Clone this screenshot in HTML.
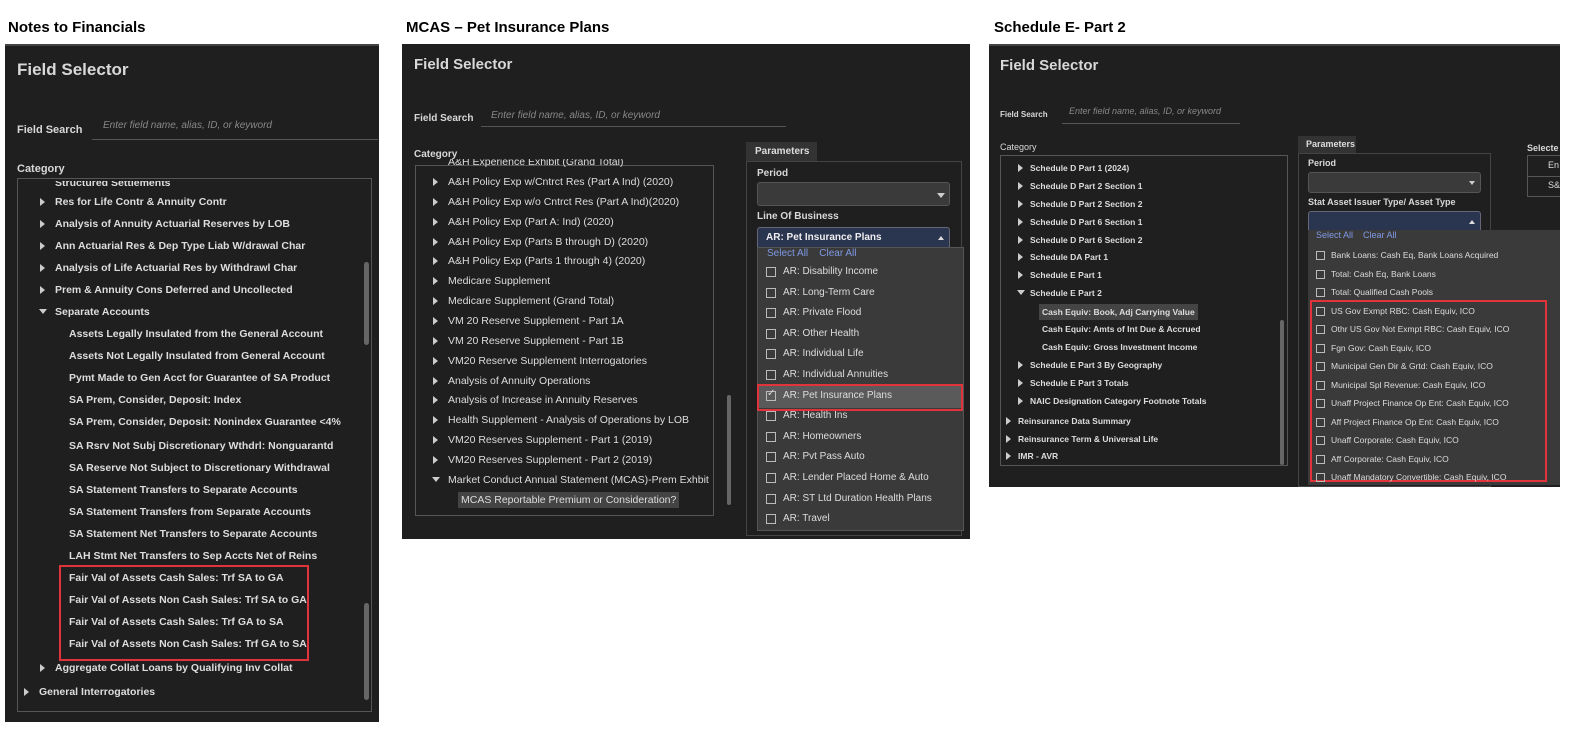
<!DOCTYPE html>
<html><head><meta charset="utf-8"><style>
*{margin:0;padding:0;box-sizing:border-box}
body{width:1588px;height:749px;background:#fff;position:relative;overflow:hidden;font-family:"Liberation Sans",sans-serif}
.a{position:absolute;white-space:nowrap}
.h{font-size:15px;font-weight:bold;color:#000;top:19px}
.p{position:absolute;background:#1f1f1f}
.t{position:absolute;color:#ddd;font-size:11px;line-height:14px;white-space:nowrap}
.b{font-weight:bold}
.ft{position:absolute;color:#d8d8d8;font-weight:bold;white-space:nowrap}
.ph{position:absolute;color:#888;font-style:italic;font-size:10px;white-space:nowrap}
.ar{position:absolute;width:0;height:0;border-top:4px solid transparent;border-bottom:4px solid transparent;border-left:5px solid #ccc}
.ad{position:absolute;width:0;height:0;border-left:4px solid transparent;border-right:4px solid transparent;border-top:5px solid #ccc}
.box{position:absolute;border:1px solid #555}
.cb{position:absolute;width:10px;height:10px;border:1px solid #bbb}
.red{position:absolute;border:2px solid #e0343a}
.sb{position:absolute;width:5px;background:#666;border-radius:3px}
</style></head><body>
<div class="a h" style="left:8px">Notes to Financials</div>
<div class="a h" style="left:406px">MCAS – Pet Insurance Plans</div>
<div class="a h" style="left:994px">Schedule E- Part 2</div>

<!-- Panel 1 -->
<div class="p" style="left:5px;top:44px;width:374px;height:678px;border-top:2px solid #444"></div>
<div class="ft" style="left:17px;top:60px;font-size:17px">Field Selector</div>
<div class="ft" style="left:17px;top:124px;font-size:11px">Field Search</div>
<div class="ph" style="left:103px;top:120px">Enter field name, alias, ID, or keyword</div>
<div class="a" style="left:92px;top:139px;width:286px;height:1px;background:#555"></div>
<div class="ft" style="left:17px;top:163px;font-size:11px">Category</div>
<div class="box" style="left:17px;top:178px;width:355px;height:534px"></div>
<div class="sb" style="left:364px;top:262px;height:83px"></div>
<div class="sb" style="left:364px;top:603px;height:97px"></div>
<div class="red" style="left:59px;top:565px;width:250px;height:96px"></div>

<!-- Panel 2 -->
<div class="p" style="left:402px;top:44px;width:568px;height:495px"></div>
<div class="ft" style="left:414px;top:56px;font-size:15px">Field Selector</div>
<div class="ft" style="left:414px;top:113px;font-size:10px">Field Search</div>
<div class="ph" style="left:491px;top:110px">Enter field name, alias, ID, or keyword</div>
<div class="a" style="left:481px;top:126px;width:305px;height:1px;background:#555"></div>
<div class="ft" style="left:414px;top:149px;font-size:10px">Category</div>
<div class="box" style="left:415px;top:165px;width:299px;height:351px"></div>
<div class="sb" style="left:727px;top:395px;height:110px;width:4px"></div>
<div class="a" style="left:746px;top:142px;width:71px;height:20px;background:#333;color:#ddd;font-size:10px;font-weight:bold;padding:4px 0 0 9px">Parameters</div>
<div class="box" style="left:746px;top:161px;width:216px;height:375px;border-color:#444"></div>
<div class="ft" style="left:757px;top:168px;font-size:10px">Period</div>
<div class="a" style="left:757px;top:182px;width:193px;height:24px;background:#3a3a3a;border:1px solid #555;border-radius:3px"></div>
<div class="ad" style="left:937px;top:193px"></div>
<div class="ft" style="left:757px;top:211px;font-size:10px">Line Of Business</div>
<div class="a" style="left:757px;top:227px;width:193px;height:21px;background:#2a3550;border:1px solid #667;border-radius:3px 3px 0 0;color:#eee;font-size:10px;font-weight:bold;padding:4px 0 0 8px">AR: Pet Insurance Plans</div>
<div class="a" style="left:938px;top:236px;border-left:3px solid transparent;border-right:3px solid transparent;border-bottom:4px solid #ddd"></div>
<div class="a" style="left:757px;top:247px;width:207px;height:284px;background:#3a3a3a;border:1px solid #555"></div>
<div class="a" style="left:767px;top:248px;font-size:10px;color:#7f9ae6">Select All&nbsp;&nbsp;&nbsp;&nbsp;Clear All</div>
<div class="a" style="left:759px;top:386px;width:203px;height:22px;background:#5a5a5a"></div>
<div class="red" style="left:757px;top:384px;width:206px;height:27px"></div>

<!-- Panel 3 -->
<div class="p" style="left:989px;top:44px;width:571px;height:443px;border-top:2px solid #444;overflow:hidden">
<div class="ft" style="left:538px;top:97px;font-size:9px">Selecte</div>
<div class="box" style="left:538px;top:109px;width:40px;height:42px"></div>
<div class="a" style="left:538px;top:130px;width:40px;height:1px;background:#555"></div>
<div class="t" style="left:559px;top:112px;font-size:9px">En</div>
<div class="t" style="left:559px;top:132px;font-size:9px">S&amp;</div>
</div>
<div class="ft" style="left:1000px;top:57px;font-size:15px">Field Selector</div>
<div class="ft" style="left:1000px;top:110px;font-size:8px">Field Search</div>
<div class="ph" style="left:1069px;top:106px;font-size:9px">Enter field name, alias, ID, or keyword</div>
<div class="a" style="left:1062px;top:123px;width:178px;height:1px;background:#555"></div>
<div class="ft" style="left:1000px;top:142px;font-size:9px;font-weight:normal">Category</div>
<div class="box" style="left:1000px;top:155px;width:288px;height:311px"></div>
<div class="sb" style="left:1280px;top:320px;height:145px;width:4px"></div>
<div class="a" style="left:1298px;top:136px;width:58px;height:18px;background:#333;color:#ddd;font-size:9px;font-weight:bold;padding:3px 0 0 8px">Parameters</div>
<div class="box" style="left:1298px;top:153px;width:193px;height:334px;border-color:#444"></div>
<div class="ft" style="left:1308px;top:158px;font-size:9px">Period</div>
<div class="a" style="left:1308px;top:172px;width:173px;height:21px;background:#3a3a3a;border:1px solid #555;border-radius:3px"></div>
<div class="ad" style="left:1469px;top:181px;border-left-width:3px;border-right-width:3px;border-top-width:4px"></div>
<div class="ft" style="left:1308px;top:197px;font-size:9px">Stat Asset Issuer Type/ Asset Type</div>
<div class="a" style="left:1308px;top:211px;width:173px;height:20px;background:#2a3550;border:1px solid #667;border-radius:3px 3px 0 0"></div>
<div class="a" style="left:1469px;top:220px;border-left:3px solid transparent;border-right:3px solid transparent;border-bottom:4px solid #ddd"></div>
<div class="a" style="left:1308px;top:230px;width:252px;height:255px;background:#3a3a3a"></div>
<div class="a" style="left:1316px;top:230px;font-size:9px;color:#7f9ae6">Select All&nbsp;&nbsp;&nbsp;&nbsp;Clear All</div>
<div class="red" style="left:1310px;top:300px;width:237px;height:182px"></div>

<script>
function add(html){document.body.insertAdjacentHTML('beforeend',html)}
function tree(items,fs,fw,ax,tx){
 items.forEach(function(it){
  var y=it[0],lvl=it[1],txt=it[2],k=it[3],clip=it[4]||0;
  var x=tx[lvl];
  if(k=='r'&&!clip)add('<div class="ar" style="left:'+ax[lvl]+'px;top:'+(y-4)+'px"></div>');
  if(k=='d')add('<div class="ad" style="left:'+(ax[lvl]-1)+'px;top:'+(y-3)+'px"></div>');
  var bg=k=='h'?'background:#444;padding:1px 3px;margin-left:-3px;':'';
  var cp=clip?'clip-path:inset('+clip+'px 0 0 0);':'';
  add('<div class="t" style="left:'+x+'px;top:'+(y-7)+'px;font-size:'+fs+'px;font-weight:'+fw+';'+bg+cp+'">'+txt+'</div>');
 });
}
var p1=[[183,1,'Structured Settlements','r',5],[202,1,'Res for Life Contr &amp; Annuity Contr','r'],[224,1,'Analysis of Annuity Actuarial Reserves by LOB','r'],[246,1,'Ann Actuarial Res &amp; Dep Type Liab W/drawal Char','r'],[268,1,'Analysis of Life Actuarial Res by Withdrawl Char','r'],[290,1,'Prem &amp; Annuity Cons Deferred and Uncollected','r'],[312,1,'Separate Accounts','d'],[334,2,'Assets Legally Insulated from the General Account'],[356,2,'Assets Not Legally Insulated from General Account'],[378,2,'Pymt Made to Gen Acct for Guarantee of SA Product'],[400,2,'SA Prem, Consider, Deposit: Index'],[422,2,'SA Prem, Consider, Deposit: Nonindex Guarantee &lt;4%'],[446,2,'SA Rsrv Not Subj Discretionary Wthdrl: Nonguarantd'],[468,2,'SA Reserve Not Subject to Discretionary Withdrawal'],[490,2,'SA Statement Transfers to Separate Accounts'],[512,2,'SA Statement Transfers from Separate Accounts'],[534,2,'SA Statement Net Transfers to Separate Accounts'],[556,2,'LAH Stmt Net Transfers to Sep Accts Net of Reins'],[578,2,'Fair Val of Assets Cash Sales: Trf SA to GA'],[600,2,'Fair Val of Assets Non Cash Sales: Trf SA to GA'],[622,2,'Fair Val of Assets Cash Sales: Trf GA to SA'],[644,2,'Fair Val of Assets Non Cash Sales: Trf GA to SA'],[668,1,'Aggregate Collat Loans by Qualifying Inv Collat','r'],[692,0,'General Interrogatories','r']];
tree(p1,10.5,'bold',[24,40,0],[39,55,69]);
var n2=['A&amp;H Policy Exp w/Cntrct Res (Part A Ind) (2020)','A&amp;H Policy Exp w/o Cntrct Res (Part A Ind)(2020)','A&amp;H Policy Exp (Part A: Ind) (2020)','A&amp;H Policy Exp (Parts B through D) (2020)','A&amp;H Policy Exp (Parts 1 through 4) (2020)','Medicare Supplement','Medicare Supplement (Grand Total)','VM 20 Reserve Supplement - Part 1A','VM 20 Reserve Supplement - Part 1B','VM20 Reserve Supplement Interrogatories','Analysis of Annuity Operations','Analysis of Increase in Annuity Reserves','Health Supplement - Analysis of Operations by LOB','VM20 Reserves Supplement - Part 1 (2019)','VM20 Reserves Supplement - Part 2 (2019)'];
var p2=[[162,1,'A&amp;H Experience Exhibit (Grand Total)','r',4]];n2.forEach(function(s,i){p2.push([182+i*19.85,1,s,'r'])});
p2.push([480,1,'Market Conduct Annual Statement (MCAS)-Prem Exhbit','d']);
p2.push([499,2,'MCAS Reportable Premium or Consideration?','h']);
tree(p2,10.5,'normal',[0,433,0],[0,448,461]);
var l2=['AR: Disability Income','AR: Long-Term Care','AR: Private Flood','AR: Other Health','AR: Individual Life','AR: Individual Annuities','AR: Pet Insurance Plans','AR: Health Ins','AR: Homeowners','AR: Pvt Pass Auto','AR: Lender Placed Home &amp; Auto','AR: ST Ltd Duration Health Plans','AR: Travel'];
l2.forEach(function(s,i){var y=272+i*20.6;add('<div class="cb" style="left:766px;top:'+(y-5)+'px"></div><div class="t" style="left:783px;top:'+(y-7)+'px;font-size:10px">'+s+'</div>');if(i==6)add('<div class="a" style="left:767px;top:'+(y-8)+'px;color:#ddd;font-size:10px">✓</div>')});
var p3=[[168,1,'Schedule D Part 1 (2024)','r'],[186,1,'Schedule D Part 2 Section 1','r'],[204,1,'Schedule D Part 2 Section 2','r'],[222,1,'Schedule D Part 6 Section 1','r'],[240,1,'Schedule D Part 6 Section 2','r'],[257,1,'Schedule DA Part 1','r'],[275,1,'Schedule E Part 1','r'],[293,1,'Schedule E Part 2','d'],[311,2,'Cash Equiv: Book, Adj Carrying Value','h'],[329,2,'Cash Equiv: Amts of Int Due &amp; Accrued'],[347,2,'Cash Equiv: Gross Investment Income'],[365,1,'Schedule E Part 3 By Geography','r'],[383,1,'Schedule E Part 3 Totals','r'],[401,1,'NAIC Designation Category Footnote Totals','r'],[421,0,'Reinsurance Data Summary','r'],[439,0,'Reinsurance Term &amp; Universal Life','r'],[456,0,'IMR - AVR','r']];
tree(p3,8.5,'bold',[1006,1018,0],[1018,1030,1042]);
var l3=['Bank Loans: Cash Eq, Bank Loans Acquired','Total: Cash Eq, Bank Loans','Total: Qualified Cash Pools','US Gov Exmpt RBC: Cash Equiv, ICO','Othr US Gov Not Exmpt RBC: Cash Equiv, ICO','Fgn Gov: Cash Equiv, ICO','Municipal Gen Dir &amp; Grtd: Cash Equiv, ICO','Municipal Spl Revenue: Cash Equiv, ICO','Unaff Project Finance Op Ent: Cash Equiv, ICO','Aff Project Finance Op Ent: Cash Equiv, ICO','Unaff Corporate: Cash Equiv, ICO','Aff Corporate: Cash Equiv, ICO','Unaff Mandatory Convertible: Cash Equiv, ICO'];
l3.forEach(function(s,i){var y=255+i*18.5;add('<div class="cb" style="left:1316px;top:'+(y-4)+'px;width:9px;height:9px"></div><div class="t" style="left:1331px;top:'+(y-7)+'px;font-size:8.5px">'+s+'</div>')});
</script>
</body></html>
